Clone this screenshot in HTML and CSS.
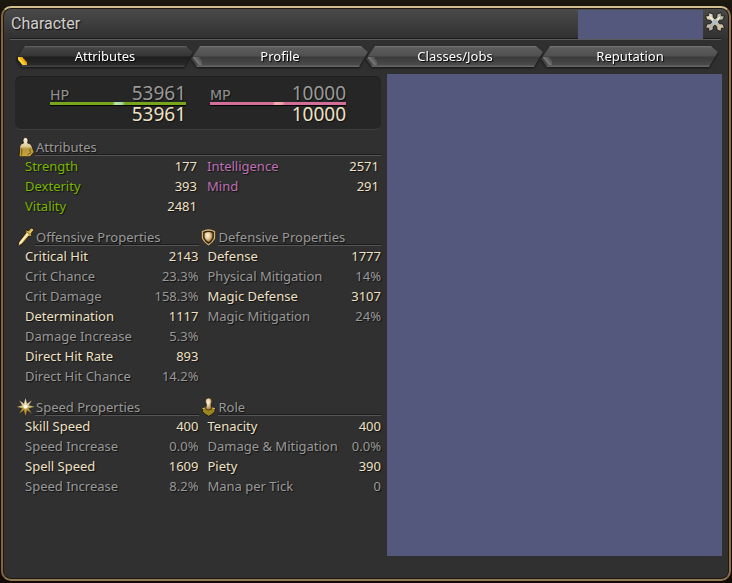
FILE: index.html
```html
<!DOCTYPE html>
<html lang="en">
<head>
<meta charset="utf-8">
<title>Character</title>
<meta name="viewport" content="width=device-width, initial-scale=1">
<link rel="stylesheet" href="styles.css">
</head>
<body>
<svg class="defs" aria-hidden="true">
  <defs>
    <linearGradient id="gold" x1="0" y1="0" x2="0" y2="1"><stop offset="0" stop-color="#fff8e4"/><stop offset=".45" stop-color="#dfcb98"/><stop offset=".6" stop-color="#b8973a"/><stop offset="1" stop-color="#c9a53c"/></linearGradient>
    <linearGradient id="metal" x1="0" y1="0" x2="1" y2="1"><stop offset="0" stop-color="#fbefd2"/><stop offset=".5" stop-color="#b3b3a8"/><stop offset="1" stop-color="#e6cda2"/></linearGradient>
    <radialGradient id="shine" cx=".4" cy=".35" r=".7"><stop offset="0" stop-color="#fffaf0"/><stop offset=".5" stop-color="#e0bf8c"/><stop offset="1" stop-color="#82601f"/></radialGradient>
  </defs>
</svg>
<main class="window">
  <header class="titlebar">
    <h1>Character</h1>
    <div class="name-cover"></div>
    <button class="close" type="button" aria-label="Close">
      <svg viewBox="0 0 20 20" width="20" height="20"><path d="M4 .5 8 2.200 8.300 5.500 10 6.800 11.700 5.500 12 2.200 16 .5 16.300 3.700 19.500 4 17.800 8 14.500 8.300 13.200 10 14.500 11.700 17.800 12 19.500 16 16.300 16.300 16 19.500 12 17.800 11.700 14.500 10 13.200 8.300 14.500 8 17.800 4 19.500 3.700 16.300.5 16 2.200 12 5.500 11.700 6.800 10 5.500 8.300 2.200 8 .5 4 3.700 3.700Z" fill="url(#metal)" stroke="#15120e" stroke-width=".8"/><circle cx="10" cy="10" r="2.600" fill="#b4c0c4"/><path d="M5 5 8 8M15 5 12 8" stroke="#fff8df" stroke-width="1.300"/></svg>
    </button>
  </header>
  <nav class="tabs">
    <button class="tab active" type="button"><span>Attributes</span></button>
    <button class="tab" type="button"><span>Profile</span></button>
    <button class="tab" type="button"><span>Classes/Jobs</span></button>
    <button class="tab" type="button"><span>Reputation</span></button>
  </nav>
  <div class="content">
    <div class="sheet">
      <section class="vitals">
        <div class="vital hp">
          <div class="line"><span class="name">HP</span><span class="current">53961</span></div>
          <div class="bar"></div>
          <div class="max">53961</div>
        </div>
        <div class="vital mp">
          <div class="line"><span class="name">MP</span><span class="current">10000</span></div>
          <div class="bar"></div>
          <div class="max">10000</div>
        </div>
      </section>
      <div class="stats">
        <section class="group wide">
          <h2><svg viewBox="0 0 18 20" width="18" height="20"><path d="M6 3.200a2.500 2.700 0 0 1 5 0q0 1.800-.4 2.800 3.600.6 4.200 3l2.400 6-4.200 4.800H2L2.800 9q.6-2.400 3.800-3Q6 5 6 3.200Z" fill="url(#gold)" stroke="#17130d" stroke-width=".8"/><path d="m4.800 11.500-.2 7M13 11.500v2.700l1 1.300-3.500 2.300" stroke="#6b5220" stroke-width=".9" fill="none"/></svg><span>Attributes</span></h2>
          <div class="pair">
            <table class="physical">
              <tr><th scope="row">Strength</th><td>177</td></tr>
              <tr><th scope="row">Dexterity</th><td>393</td></tr>
              <tr><th scope="row">Vitality</th><td>2481</td></tr>
            </table>
            <table class="mental">
              <tr><th scope="row">Intelligence</th><td>2571</td></tr>
              <tr><th scope="row">Mind</th><td>291</td></tr>
            </table>
          </div>
        </section>
        <section class="group">
          <h2><svg viewBox="0 0 18 20" width="18" height="20"><path d="m.6 19.400 1.800-5L9 5.800 8.200 4.200l1.500-1.100 1.900.8L14 1l2.200.4.300 2.100-2.400 2.900.8 2-1.400 1.100-1.600-.5-6.800 7.900Z" fill="#e3c164" stroke="#17130d" stroke-width=".8"/><path d="m2.500 16.800 8.300-10" stroke="#fff4cb" stroke-width="1.500"/><path d="m9 4 5 4.600" stroke="#94702a" stroke-width="1"/></svg><span>Offensive Properties</span></h2>
          <table>
            <tr><th scope="row">Critical Hit</th><td>2143</td></tr>
            <tr class="derived"><th scope="row">Crit Chance</th><td>23.3%</td></tr>
            <tr class="derived"><th scope="row">Crit Damage</th><td>158.3%</td></tr>
            <tr><th scope="row">Determination</th><td>1117</td></tr>
            <tr class="derived"><th scope="row">Damage Increase</th><td>5.3%</td></tr>
            <tr><th scope="row">Direct Hit Rate</th><td>893</td></tr>
            <tr class="derived"><th scope="row">Direct Hit Chance</th><td>14.2%</td></tr>
          </table>
        </section>
        <section class="group">
          <h2><svg viewBox="0 0 18 20" width="18" height="20"><path d="M2.500 4.500Q8.500 1.500 14.500 4.500v6.800Q12.500 15.500 8.500 17.800 4.500 15.500 2.500 11.300Z" fill="#2c2110" stroke="#d4b06b" stroke-width="1.300"/><path d="M4.500 6Q8.500 3.800 12.500 6v4.700q-1.200 3-4 4.600-2.800-1.600-4-4.600Z" fill="url(#shine)"/></svg><span>Defensive Properties</span></h2>
          <table>
            <tr><th scope="row">Defense</th><td>1777</td></tr>
            <tr class="derived"><th scope="row">Physical Mitigation</th><td>14%</td></tr>
            <tr><th scope="row">Magic Defense</th><td>3107</td></tr>
            <tr class="derived"><th scope="row">Magic Mitigation</th><td>24%</td></tr>
          </table>
        </section>
        <section class="group">
          <h2><svg viewBox="0 0 18 20" width="18" height="20"><path d="m8.500.8 1.600 5.800 4.900-3.400-3.200 5.100 6.200 1.500-6.200 1.600 3.200 5.300-4.900-3.500-1.600 6-1.600-6L2 16.700l3.200-5.300L-.5 9.800l5.700-1.500L2 3.200l4.900 3.400Z" fill="url(#gold)" stroke="#2a200c" stroke-width=".3"/><circle cx="8.500" cy="9.700" r="2" fill="#fffbe9"/></svg><span>Speed Properties</span></h2>
          <table>
            <tr><th scope="row">Skill Speed</th><td>400</td></tr>
            <tr class="derived"><th scope="row">Speed Increase</th><td>0.0%</td></tr>
            <tr><th scope="row">Spell Speed</th><td>1609</td></tr>
            <tr class="derived"><th scope="row">Speed Increase</th><td>8.2%</td></tr>
          </table>
        </section>
        <section class="group">
          <h2><svg viewBox="0 0 18 20" width="18" height="20"><path d="M2.500 11q6-2 12.500 0v3.500Q12 18 8.700 19.300 5 18 2.500 14.500Z" fill="#9a8420" stroke="#17130d" stroke-width=".8"/><path d="M2.500 11.500q6-2 12.500 0" stroke="#dcc56a" fill="none"/><path d="M5.500 4a3.200 3 0 0 1 6.400 0c0 1.800-1.200 2.600-1 4l1 4q-3.200 2-6.400 0l1-4C6.700 6.600 5.500 5.800 5.500 4Z" fill="url(#shine)" stroke="#17130d" stroke-width=".5"/></svg><span>Role</span></h2>
          <table>
            <tr><th scope="row">Tenacity</th><td>400</td></tr>
            <tr class="derived"><th scope="row">Damage &amp; Mitigation</th><td>0.0%</td></tr>
            <tr><th scope="row">Piety</th><td>390</td></tr>
            <tr class="derived"><th scope="row">Mana per Tick</th><td>0</td></tr>
          </table>
        </section>
      </div>
    </div>
    <aside class="cover"></aside>
  </div>
</main>
</body>
</html>
```
FILE: styles.css
```css
* {
  box-sizing: border-box;
}

body {
  margin: 0;
  padding: 6px 1px 2px;
  min-height: 100vh;
  background: linear-gradient(#1c1910, #120b06 30px);
  color: #eee1c5;
  font: 13px/20px "Noto Sans", "Open Sans", sans-serif;
  text-shadow: 1px 1px 1px #111;
}

.defs {
  position: absolute;
  width: 0;
  height: 0;
}

.window {
  min-height: calc(100vh - 8px);
  padding-bottom: 22px;
  border: 2px solid;
  border-color: #d2bf90 #8c6f43 #8d7a54 #80663a;
  border-radius: 10px;
  background: linear-gradient(#4b4b4b, #333 28px, #303030 32px);
  box-shadow: inset 0 0 0 1px #201712;
}

/* Title bar */

.titlebar {
  display: flex;
  align-items: center;
  height: 31px;
  margin: 1px 8px 0 7px;
  border-bottom: 1px solid #5a5a5a;
  box-shadow: inset 0 -1px #1d1d1d;
}

h1 {
  flex: 1;
  margin: 0;
  padding-left: 1px;
  color: #cfcfcf;
  font: 16px/30px Roboto, "Liberation Sans", sans-serif;
}

.name-cover {
  align-self: stretch;
  width: 125px;
  margin: 1px 2px 0 0;
  background: #55587d;
}

.close {
  width: 20px;
  height: 20px;
  margin: 0 -4px 4px 0;
  padding: 0;
  border: 0;
  background: none;
}

svg {
  display: block;
}

/* Tabs */

.tabs {
  display: flex;
  margin: 6px 10px 7px 13px;
}

.tab {
  flex: 1;
  height: 21px;
  margin-right: -3px;
  padding: 0;
  border: 0;
  background: none;
  color: #fff;
  font: inherit;
  text-shadow: 1px 1px 1px #000;
  filter: drop-shadow(0 1px 1px #111);
}

.tab:last-child {
  margin-right: 0;
}

.tab span {
  display: block;
  line-height: 21px;
  clip-path: polygon(0 13px, 9px 0, calc(100% - 8px) 0, calc(100% - 1px) 6px, calc(100% - 10px) 100%, 6px 100%);
  background:
    linear-gradient(50deg, transparent 4px, #777 5px, #555 9px, transparent 10px) 2px 11px / 9px 8px no-repeat,
    linear-gradient(#777, #5c5c5c 2px, #505050 10px, #3b3b3b 11px, #4a4a4a 19px, #666 20px);
}

.tab.active span {
  background:
    linear-gradient(50deg, transparent 3px, #ffe14a 4px, #e89c00 8px, transparent 9px) 2px 11px / 9px 8px no-repeat,
    linear-gradient(#666, #444 2px, #353535 10px, #1e1e1e 11px, #292929 19px, #444 20px);
}

/* Content */

.content {
  display: grid;
  grid-template-columns: 366fr 335fr;
  gap: 6px;
  margin: 0 7px 0 12px;
}

.cover {
  min-height: 482px;
  background: #55587d;
}

.vitals {
  display: grid;
  grid-template-columns: 1fr 1fr;
  gap: 24px;
  margin: 2px 0 7px;
  padding: 8px 35px 6px;
  border-bottom: 1px solid #3e3e3e;
  border-radius: 6px;
  background: #262626;
  box-shadow: inset 0 1px #202020;
}

.line {
  display: flex;
  align-items: flex-end;
  justify-content: space-between;
}

.name {
  color: #8f8f8f;
  font: 14px/14px "DejaVu Sans", sans-serif;
}

.current,
.max {
  font-size: 19px;
  line-height: 18px;
}

.current {
  color: #999;
}

.max {
  text-align: right;
}

.bar {
  height: 3px;
  box-shadow: 0 1px 1px #000;
}

.hp .bar {
  background: linear-gradient(100deg, #78a51c 46%, #b5e8b0 48%, #a5dba0 53%, #78a51c 55%);
}

.mp .bar {
  background: linear-gradient(100deg, #d36e98 46%, #f0aeb0 48%, #eaa4a8 53%, #d36e98 55%);
}

/* Stat groups */

.stats {
  display: grid;
  grid-template-columns: 1fr 1fr;
  gap: 11px 1px;
  margin-left: 2px;
}

.wide {
  grid-column: 1 / -1;
}

.pair {
  display: grid;
  grid-template-columns: 1fr 1fr;
  align-items: start;
}

h2 {
  display: flex;
  height: 19px;
  margin: 0;
  color: #999;
  font: inherit;
}

h2 span {
  flex: 1;
  padding-left: 1px;
  border-bottom: 1px solid #555;
  box-shadow: inset 0 -1px #1c1c1c;
}

table {
  width: 100%;
  border-collapse: collapse;
}

th,
td {
  padding: 0;
  font-weight: normal;
  text-align: right;
  white-space: nowrap;
}

th {
  padding-left: 8px;
  text-align: left;
}

.pair td {
  padding-right: 2px;
}

.physical th {
  color: #78b500;
}

.mental th {
  color: #bd70b5;
}

.derived {
  color: #999;
}
```
